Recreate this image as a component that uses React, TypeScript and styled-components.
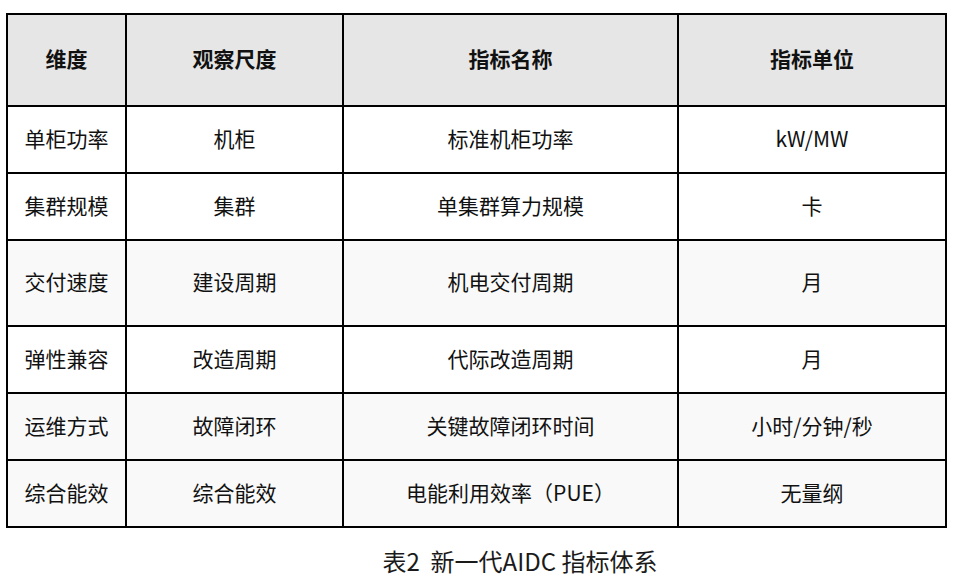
import React from "react";
import styled, { createGlobalStyle } from "styled-components";

const Global = createGlobalStyle`
  html, body { margin: 0; padding: 0; background: #ffffff; }
  body { font-family: "Noto Sans CJK SC", "Noto Sans", sans-serif; color: #111111; }
`;

const Page = styled.div`
  width: 956px;
  height: 588px;
  padding: 13px 0 0 6px;
  box-sizing: border-box;
`;

const Table = styled.div`
  display: grid;
  width: 941px;
  box-sizing: border-box;
  grid-template-columns: 117px 215px 333px 266px;
  grid-template-rows: 90px 65px 65px 84px 65px 65px 65px;
  gap: 2px;
  padding: 2px;
  background: #000000;
`;

const Cell = styled.div<{ $bg: string; $head?: boolean }>`
  display: flex;
  align-items: center;
  justify-content: center;
  padding-bottom: 4px;
  box-sizing: border-box;
  background: ${(p) => p.$bg};
  font-size: 21px;
  font-weight: ${(p) => (p.$head ? 700 : 400)};
  color: #111111;
  white-space: nowrap;
`;

const Caption = styled.div`
  margin-top: 18px;
  padding-left: 78px;
  text-align: center;
  font-size: 24px;
  line-height: 30px;
  color: #1a1a1a;
  white-space: pre;
`;

const header = ["维度", "观察尺度", "指标名称", "指标单位"];
const rows: { cells: string[]; grey: boolean }[] = [
  { cells: ["单柜功率", "机柜", "标准机柜功率", "kW/MW"], grey: false },
  { cells: ["集群规模", "集群", "单集群算力规模", "卡"], grey: false },
  { cells: ["交付速度", "建设周期", "机电交付周期", "月"], grey: true },
  { cells: ["弹性兼容", "改造周期", "代际改造周期", "月"], grey: false },
  { cells: ["运维方式", "故障闭环", "关键故障闭环时间", "小时/分钟/秒"], grey: true },
  { cells: ["综合能效", "综合能效", "电能利用效率（PUE）", "无量纲"], grey: true },
];

export default function App() {
  return (
    <>
      <Global />
      <Page>
        <Table>
          {header.map((h) => (
            <Cell key={h} $bg="#e6e6e6" $head>
              {h}
            </Cell>
          ))}
          {rows.map((r, i) =>
            r.cells.map((c, j) => (
              <Cell key={`${i}-${j}`} $bg={r.grey ? "#f9f9f9" : "#ffffff"}>
                {c}
              </Cell>
            ))
          )}
        </Table>
        <Caption>{"表2  新一代AIDC 指标体系"}</Caption>
      </Page>
    </>
  );
}
